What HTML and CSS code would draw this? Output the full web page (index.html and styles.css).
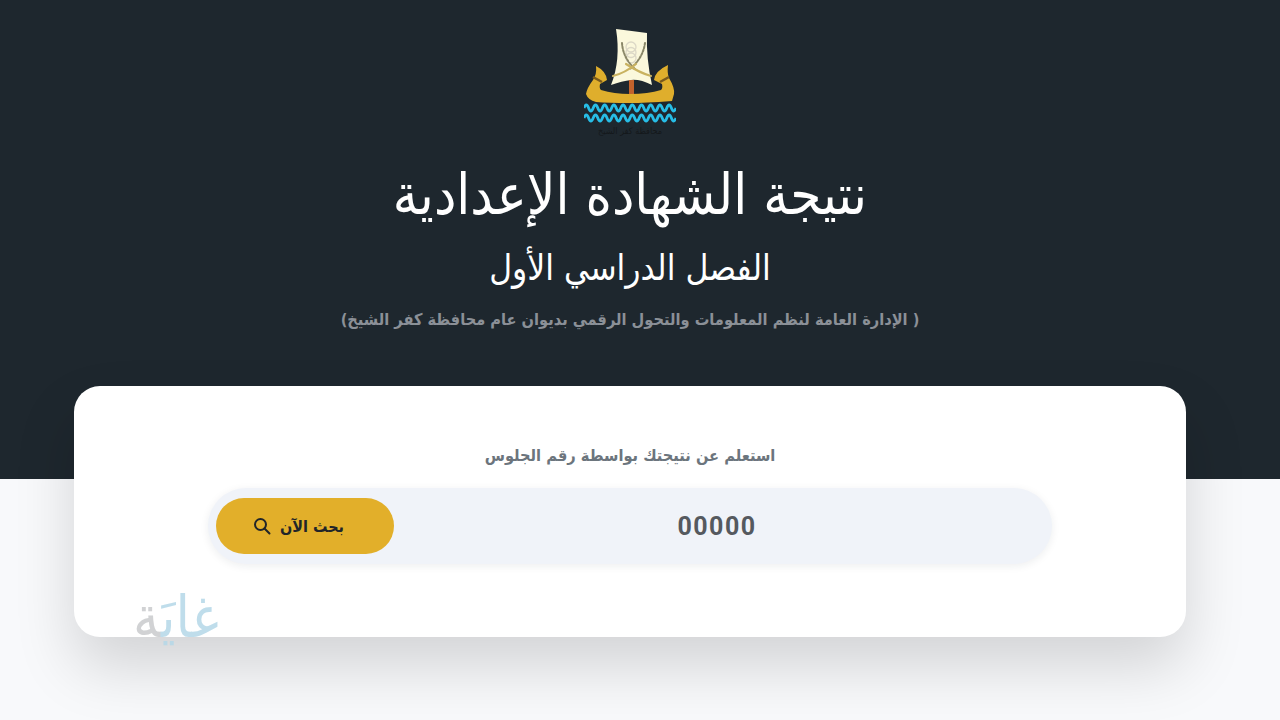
FILE: index.html
```html
<!DOCTYPE html>
<html lang="ar" dir="rtl">
<head>
    <meta charset="UTF-8">
    <meta name="viewport" content="width=device-width, initial-scale=1.0">
    <title>نتيجة الشهادة الإعدادية</title>
    <link rel="stylesheet" href="styles.css">
</head>
<body>
    <header class="hero">
        <svg class="logo" width="92" height="110" viewBox="0 0 92 110" aria-hidden="true">
            <!-- sail -->
            <path d="M32 1 Q48 3 63 5 Q62 30 68 57 Q56 51 47 52 Q38 53 27 57 Q37 32 32 1Z" fill="#fbf8dc"/>
            <rect x="45" y="52" width="5" height="16" fill="#c2622c"/>
            <!-- wreath and crossed oars -->
            <g fill="none" stroke-linecap="round">
                <circle cx="47" cy="19" r="5" stroke="#dcd8c6" stroke-width="1.300"/>
                <circle cx="47" cy="24.500" r="5" stroke="#dcd8c6" stroke-width="1.300"/>
                <circle cx="47" cy="30" r="5" stroke="#dcd8c6" stroke-width="1.300"/>
                <path d="M38 15 Q39 30 51 41" stroke="#8a8768" stroke-width="2" stroke-dasharray="2 1.500"/>
                <path d="M61 15 Q59 30 46 41" stroke="#8a8768" stroke-width="2" stroke-dasharray="2 1.500"/>
                <path d="M29 48 Q41 45 52 36" stroke="#c9b260" stroke-width="2.200"/>
                <path d="M67 48 Q56 45 42 36" stroke="#c9b260" stroke-width="2.200"/>
            </g>
            <!-- boat -->
            <path d="M12 38 Q22 43 23 52 L16 56 Q15 60 17 62 Q30 66 46 66 Q64 66 77 62 Q79 60 78 56 L70 52 Q71 43 84 37 Q83 45 85 50 Q91 60 90 66 L88 73 Q60 75 46 75 Q24 75 12 74 Q4 72 2 66 Q3 60 9 52 Q13 46 12 38Z" fill="#dfae2c"/>
            <path d="M9 49 L18 54 M85 49 L76 54" stroke="#7a5a1c" stroke-width="2.500"/>
            <!-- water -->
            <path d="M0 80 q2.300-6 4.600 0 t4.600 0 t4.600 0 t4.600 0 t4.600 0 t4.600 0 t4.600 0 t4.600 0 t4.600 0 t4.600 0 t4.600 0 t4.600 0 t4.600 0 t4.600 0 t4.600 0 t4.600 0 t4.600 0 t4.600 0 t4.600 0 t4.600 0" fill="none" stroke="#27bde6" stroke-width="2.800"/>
            <path d="M0 90 q2.300-6 4.600 0 t4.600 0 t4.600 0 t4.600 0 t4.600 0 t4.600 0 t4.600 0 t4.600 0 t4.600 0 t4.600 0 t4.600 0 t4.600 0 t4.600 0 t4.600 0 t4.600 0 t4.600 0 t4.600 0 t4.600 0 t4.600 0 t4.600 0" fill="none" stroke="#27bde6" stroke-width="2.800"/>
            <text x="46" y="106" text-anchor="middle" class="logo-text">محافظة كفر الشيخ</text>
        </svg>
        <h1 class="title">نتيجة الشهادة الإعدادية</h1>
        <h2 class="subtitle">الفصل الدراسي الأول</h2>
        <p class="dept">( الإدارة العامة لنظم المعلومات والتحول الرقمي بديوان عام محافظة كفر الشيخ)</p>
    </header>

    <main class="card">
        <label class="search-label" for="seat">استعلم عن نتيجتك بواسطة رقم الجلوس</label>
        <form class="search-box">
            <input type="text" id="seat" class="search-input" placeholder="00000">
            <button type="button" class="search-btn">
                <span>بحث الآن</span>
                <svg width="18" height="18" viewBox="0 0 18 18" fill="none" stroke="#212529" stroke-width="2" stroke-linecap="round">
                    <circle cx="7.500" cy="7.500" r="5.500"/>
                    <path d="M11.500 11.500l5 5"/>
                </svg>
            </button>
        </form>
        <div class="watermark">غايَ<span class="watermark-end">ة</span></div>
    </main>
</body>
</html>
```

FILE: styles.css
```css
* {
    box-sizing: border-box;
}

body {
    margin: 0;
    height: 720px;
    overflow: hidden;
    font-family: "DejaVu Sans", "Noto Sans", sans-serif;
    font-stretch: condensed;
    background: #f8f9fb;
}

.hero {
    height: 479px;
    padding: 28px 20px 0 0;
    background: #1e272e;
    color: #fff;
    display: flex;
    flex-direction: column;
    align-items: center;
}

.logo {
    flex: none;
}

.logo-text {
    font-size: 9px;
    fill: #14181b;
}

.title {
    margin: 24px 0 0;
    font-size: 56px;
    line-height: 66px;
    font-weight: 400;
}

.subtitle {
    margin: 18px 0 0;
    font-size: 35px;
    line-height: 44px;
    font-weight: 400;
}

.dept {
    margin: 18px 0 0;
    font-size: 16.250px;
    line-height: 24px;
    font-weight: 700;
    color: #8b9097;
}

.card {
    position: relative;
    height: 251px;
    margin: -93px 94px 0 74px;
    padding-top: 56px;
    background: #fff;
    border-radius: 26px;
    box-shadow: 0 30px 60px rgba(0, 0, 0, 0.15);
    display: flex;
    flex-direction: column;
    align-items: center;
}

.search-label {
    font-size: 16.300px;
    line-height: 28px;
    font-weight: 700;
    color: #6c757d;
}

.search-box {
    width: 844px;
    height: 76px;
    margin-top: 18px;
    padding: 8px;
    background: #f0f3f9;
    border-radius: 38px;
    box-shadow: 0 2px 8px rgba(30, 39, 46, 0.08);
    display: flex;
    align-items: center;
}

.search-input {
    flex: 1;
    min-width: 0;
    padding-right: 6px;
    border: 0;
    background: transparent;
    text-align: center;
    font: 700 25px Roboto, sans-serif;
    letter-spacing: 1.500px;
    outline: none;
}

.search-input::placeholder {
    color: #55595f;
    opacity: 1;
}

.search-btn {
    flex: none;
    width: 178px;
    height: 56px;
    padding: 0 13px 0 0;
    border: 0;
    border-radius: 28px;
    background: #e2af2a;
    color: #212529;
    font-family: "DejaVu Sans", sans-serif;
    font-stretch: condensed;
    font-size: 16px;
    font-weight: 700;
    display: flex;
    align-items: center;
    justify-content: center;
    gap: 9px;
}

.watermark {
    position: absolute;
    left: 59px;
    bottom: -20px;
    font-size: 58px;
    line-height: 80px;
    color: #b5d8e8;
    opacity: 0.85;
}

.watermark-end {
    color: #c9cbcd;
}
```
